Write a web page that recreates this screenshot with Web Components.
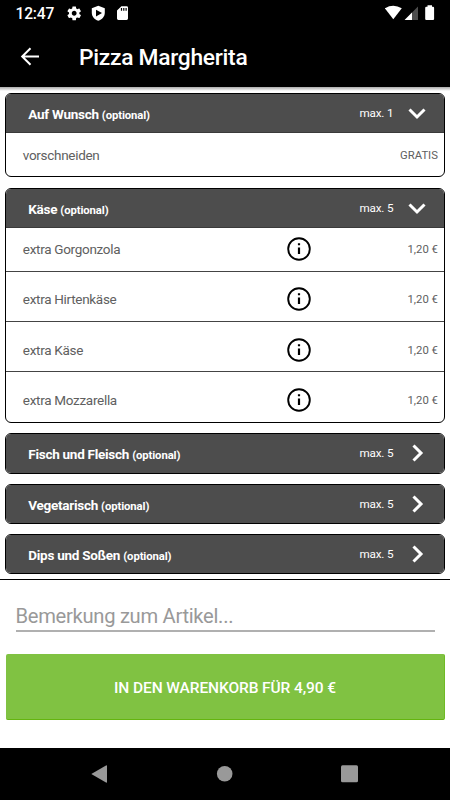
<!DOCTYPE html>
<html lang="de">
<head>
<meta charset="utf-8">
<meta name="viewport" content="width=device-width, initial-scale=1">
<title>Pizza Margherita</title>
<style>
	body {
		margin: 0;
		background: #fff;
		font-family: Roboto, "Liberation Sans", sans-serif;
	}
</style>
</head>
<body>
<article-screen>
	<status-bar slot="top" time="12:47"></status-bar>
	<title-bar slot="top">Pizza Margherita</title-bar>

	<option-group label="Auf Wunsch" max="1" open>
		<option-row price="GRATIS">vorschneiden</option-row>
	</option-group>
	<option-group label="Käse" max="5" open>
		<option-row price="1,20 €" info>extra Gorgonzola</option-row>
		<option-row price="1,20 €" info>extra Hirtenkäse</option-row>
		<option-row price="1,20 €" info>extra Käse</option-row>
		<option-row price="1,20 €" info>extra Mozzarella</option-row>
	</option-group>
	<option-group label="Fisch und Fleisch" max="5"></option-group>
	<option-group label="Vegetarisch" max="5"></option-group>
	<option-group label="Dips und Soßen" max="5"></option-group>

	<order-footer slot="bottom" placeholder="Bemerkung zum Artikel...">In den Warenkorb für 4,90 €</order-footer>
	<nav-bar slot="bottom"></nav-bar>
</article-screen>

<script>
class BaseElement extends HTMLElement {
	constructor() {
		super();
		this.attachShadow({ mode: 'open' });
	}

	connectedCallback() {
		this.shadowRoot.innerHTML = this.render();
	}
}

class ArticleScreen extends BaseElement {
	render() {
		return `
      <style>
        :host {
          display: flex;
          flex-direction: column;
          height: 800px;
          overflow: hidden;
        }
        main {
          flex: 1;
          min-height: 0;
          display: flex;
          flex-direction: column;
          gap: 10px;
          padding: 6px 4.6px 0 5.3px;
          background: linear-gradient(#aaa, #fff 4px);
          overflow: hidden;
        }
      </style>
      <slot name="top"></slot>
      <main><slot></slot></main>
      <slot name="bottom"></slot>
    `;
	}
}

class StatusBar extends BaseElement {
	render() {
		return `
      <style>
        :host {
          display: flex;
          align-items: center;
          height: 27px;
          padding: 0 15px 0 15.5px;
          background: #000;
          color: #fff;
          font-size: 15.6px;
          font-weight: 500;
        }
        time { width: 51.5px; line-height: 27px; letter-spacing: -.2px; padding-top: 1px; }
        svg { display: block; fill: #fff; }
        .left { width: 62px; height: 27px; }
        .right { width: 50px; height: 27px; margin-left: auto; }
      </style>
      <time>${this.getAttribute('time')}</time>
      <svg class="left" viewBox="67 0 62 27">
        <path transform="translate(65.9 5) scale(.69)" d="M19.43 12.98c.04-.32.07-.64.07-.98s-.03-.66-.07-.98l2.11-1.65c.19-.15.24-.42.12-.64l-2-3.46c-.12-.22-.39-.3-.61-.22l-2.49 1c-.52-.4-1.08-.73-1.69-.98l-.38-2.65C14.46 2.18 14.25 2 14 2h-4c-.25 0-.46.18-.49.42l-.38 2.65c-.61.25-1.17.59-1.69.98l-2.49-1c-.23-.09-.49 0-.61.22l-2 3.46c-.13.22-.07.49.12.64l2.11 1.65c-.04.32-.07.65-.07.98s.03.66.07.98l-2.11 1.65c-.19.15-.24.42-.12.64l2 3.46c.12.22.39.3.61.22l2.49-1c.52.4 1.08.73 1.69.98l.38 2.65c.03.24.24.42.49.42h4c.25 0 .46-.18.49-.42l.38-2.65c.61-.25 1.17-.59 1.69-.98l2.49 1c.23.09.49 0 .61-.22l2-3.46c.12-.22.07-.49-.12-.64l-2.11-1.65zM12 15.5c-1.93 0-3.5-1.57-3.5-3.5s1.57-3.5 3.5-3.5 3.5 1.57 3.5 3.5-1.57 3.5-3.5 3.5z"/>
        <path fill-rule="evenodd" d="M98.3 5.7l6.5 2.6v4.5c0 3.7-2.7 6.9-6.5 8-3.8-1.1-6.5-4.3-6.5-8V8.3zM96 9.7v6.8l6-3.4z"/>
        <path fill-rule="evenodd" d="M121.4 6.2h5.2q1.4 0 1.4 1.4v10.9q0 1.4-1.4 1.4h-8.2q-1.4 0-1.4-1.4v-7.9zM120.9 7.9v2.8h1.2v-2.8zM123.2 7.9v2.8h1.2v-2.8zM125.5 7.9v2.8h1.2v-2.8z"/>
      </svg>
      <svg class="right" viewBox="385 0 50 27">
        <path d="M384.9 8.3q8.4-5 16.9 0L393.3 19.2z"/>
        <path fill="#4d4d4d" d="M418 6.6V20h-13.4z"/>
        <path d="M412 12.6V20h-7.4z"/>
        <path d="M427.5 5.2h4.5v1.6h1q1.1 0 1.1 1.1v11q0 1.1-1.1 1.1h-6.7q-1.1 0-1.1-1.1v-11q0-1.1 1.1-1.1h1.2z"/>
      </svg>
    `;
	}
}

class TitleBar extends BaseElement {
	render() {
		return `
      <style>
        :host {
          display: flex;
          align-items: center;
          gap: 39px;
          height: 60px;
          padding-left: 20px;
          background: #000;
          color: #fff;
        }
        svg { width: 20px; height: 20px; fill: none; stroke: #fff; stroke-width: 2; }
        h1 { margin: 0; font-size: 22.8px; font-weight: 500; line-height: 60px; letter-spacing: -.28px; padding-top: 2px; }
      </style>
      <svg viewBox="0 0 20 20"><path d="M19 9.5H2M10.5 1.3L2.2 9.5l8.3 8.2"/></svg>
      <h1><slot></slot></h1>
    `;
	}
}

class OptionGroup extends BaseElement {
	render() {
		const open = this.hasAttribute('open');
		const arrow = open ? 'M4.5 8.5L12 16l7.5-7.5' : 'M8.5 4.5L16 12l-7.5 7.5';

		return `
      <style>
        :host {
          display: block;
          flex: none;
          box-sizing: border-box;
          border: 1px solid #000;
          border-radius: 6px;
          background: #fff;
          overflow: hidden;
        }
        :host([open]) { margin-bottom: .4px; }
        header {
          display: flex;
          align-items: center;
          height: 38.4px;
          padding: 0 15.5px 0 22px;
          background: #4d4d4d;
          color: #fff;
        }
        :host([open]) header { border-bottom: 1px solid #3a3a3a; height: 38px; }
        h2 { flex: 1; margin: 0; font-size: 13.5px; font-weight: 700; letter-spacing: -.27px; padding-top: 2px; }
        small { font-size: 11.3px; letter-spacing: -.1px; }
        span { font-size: 11.7px; width: 45.5px; letter-spacing: -.15px; }
        svg { width: 24px; height: 24px; fill: none; stroke: #fff; stroke-width: 3; }
      </style>
      <header>
        <h2>${this.getAttribute('label')} <small>(optional)</small></h2>
        <span>max. ${this.getAttribute('max')}</span>
        <svg viewBox="0 0 24 24"><path d="${arrow}"/></svg>
      </header>
      <slot></slot>
    `;
	}
}

class OptionRow extends BaseElement {
	render() {
		const info = `
      <svg viewBox="0 0 24 24">
        <circle cx="12" cy="12" r="10.8"/>
        <path d="M12 6.3v2M12 10.5v6.5"/>
      </svg>`;

		return `
      <style>
        :host {
          display: grid;
          grid-template-columns: 1fr 24px 127px;
          align-items: center;
          box-sizing: border-box;
          height: 43.2px;
          padding: 0 6.5px 0 16.5px;
          color: #606060;
          font-size: 13.5px;
        }
        :host(:not(:first-child)) {
          height: 50.35px;
          padding-top: 6px;
          border-top: 1px solid #444;
        }
        span { letter-spacing: -.3px; }
        svg { grid-column: 2; width: 24px; height: 24px; fill: none; stroke: #000; stroke-width: 1.9; }
        path { stroke-width: 2.2; }
        data { grid-column: 3; text-align: right; font-size: 11.3px; padding-top: 1px; }
      </style>
      <span><slot></slot></span>
      ${this.hasAttribute('info') ? info : ''}
      <data>${this.getAttribute('price')}</data>
    `;
	}
}

class OrderFooter extends BaseElement {
	render() {
		return `
      <style>
        :host {
          display: flex;
          flex-direction: column;
          flex: none;
          box-sizing: border-box;
          height: 169px;
          border-top: 1px solid #000;
          padding: 21px 5px 0 6px;
          background: #fff;
        }
        input {
          box-sizing: border-box;
          height: 31px;
          margin: 0 10px 22px 9.5px;
          padding: 0;
          border: 0;
          border-bottom: 2px solid #b0b0b0;
          font: 20.2px Roboto, "Liberation Sans", sans-serif;
          letter-spacing: -.3px;
          background: none;
          outline: none;
        }
        input::placeholder { color: #999; opacity: 1; }
        button {
          box-sizing: border-box;
          height: 66px;
          border: 0;
          border-bottom: 1px solid #64b50f;
          border-right: 1px solid #6fbb25;
          border-radius: 2px;
          background: #80c242;
          color: #fff;
          font: 500 15.5px Roboto, "Liberation Sans", sans-serif;
          letter-spacing: -.1px;
          text-transform: uppercase;
          padding: 3px 0 0;
        }
      </style>
      <input placeholder="${this.getAttribute('placeholder')}">
      <button><slot></slot></button>
    `;
	}
}

class NavBar extends BaseElement {
	render() {
		return `
      <style>
        :host {
          display: grid;
          grid-template-columns: 18px 18px 18px;
          justify-content: center;
          align-items: center;
          gap: 107px;
          height: 52px;
          padding-right: 1px;
          background: #000;
        }
        svg { width: 18px; height: 18px; fill: #999; }
      </style>
      <svg viewBox="0 0 18 18"><path d="M.3 9L15 .4q1-.4 1 .6v16q0 1-1 .6z"/></svg>
      <svg viewBox="0 0 18 18"><circle cx="8.7" cy="8.7" r="7.8"/></svg>
      <svg viewBox="0 0 18 18"><rect x="0" y=".3" width="17" height="17" rx="1.5"/></svg>
    `;
	}
}

customElements.define('article-screen', ArticleScreen);
customElements.define('status-bar', StatusBar);
customElements.define('title-bar', TitleBar);
customElements.define('option-group', OptionGroup);
customElements.define('option-row', OptionRow);
customElements.define('order-footer', OrderFooter);
customElements.define('nav-bar', NavBar);
</script>
</body>
</html>
